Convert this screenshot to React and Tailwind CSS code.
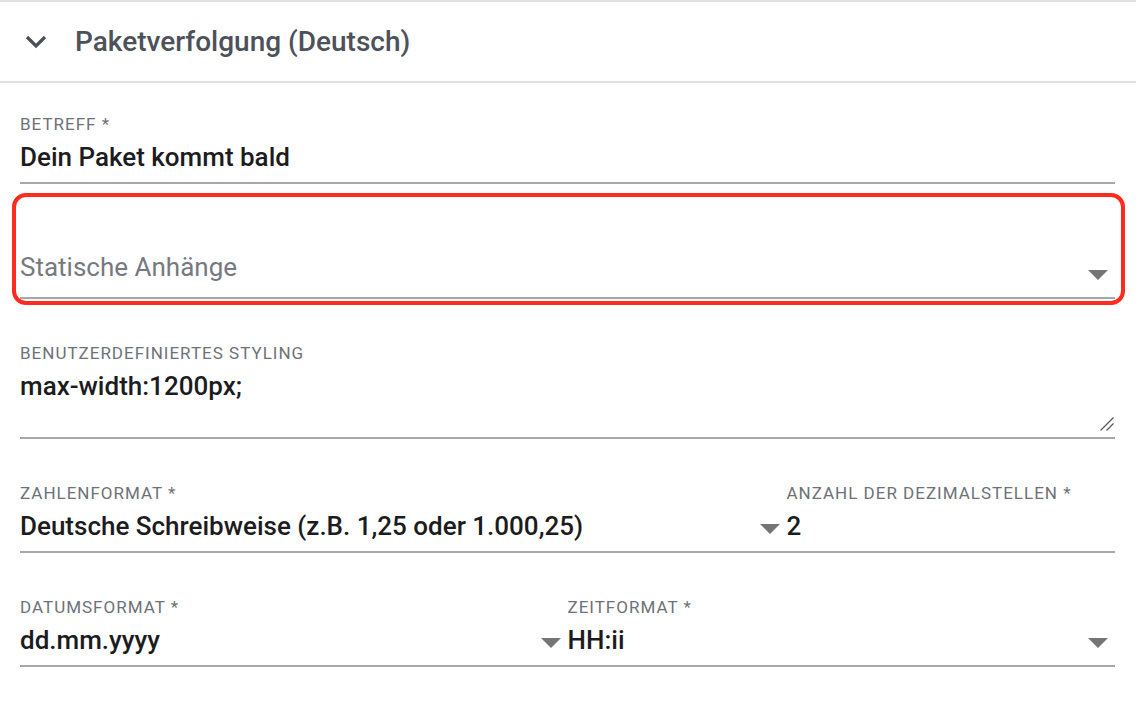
import React from "react";

function Triangle() {
  return (
    <svg
      className="absolute right-[7px] top-[41px]"
      width="20"
      height="10"
      viewBox="0 0 20 10"
    >
      <path d="M0 0 L20 0 L10 10 Z" fill="#757575" />
    </svg>
  );
}

function Field({ label, value, select, textarea, className = "" }) {
  return (
    <div className={`relative border-b-2 border-[#a6a8ac] pb-[9px] ${className}`}>
      <div className="h-5 text-[17px] leading-5 tracking-[1px] text-[#6d7178] uppercase whitespace-nowrap">
        {label}
      </div>
      <div
        className={`mt-[7px] ${textarea ? "h-[58px]" : "h-8"} text-[26px] leading-8 font-medium text-[#1c1c1e] whitespace-nowrap`}
      >
        {value}
      </div>
      {select && <Triangle />}
      {textarea && (
        <svg
          className="absolute right-[1px] bottom-[6px]"
          width="14"
          height="14"
          viewBox="0 0 14 14"
        >
          <path d="M13.5 0.5 L0.5 13.5 M13.5 6.5 L6.5 13.5" stroke="#5a5a5a" strokeWidth="1.3" />
        </svg>
      )}
    </div>
  );
}

export default function App() {
  return (
    <div
      className="w-[1136px] h-[722px] bg-white overflow-hidden"
      style={{ fontFamily: "Roboto, 'Noto Sans', Arial, sans-serif" }}
    >
      <div className="h-[83px] border-t-2 border-b-2 border-[#dde1e5] flex items-center pl-6">
        <svg width="24" height="16" viewBox="0 0 24 16">
          <path
            d="M3 3 L12 12 L21 3"
            fill="none"
            stroke="#4b4f58"
            strokeWidth="3.2"
          />
        </svg>
        <div className="ml-[27px] text-[28px] font-medium text-[#4d5159] leading-8 whitespace-nowrap">
          Paketverfolgung (Deutsch)
        </div>
      </div>

      <div className="pl-5 pr-[21px]">
        <Field className="mt-[31px]" label="Betreff *" value="Dein Paket kommt bald" />

        <div className="relative mt-[45px]">
          <div className="relative h-[70px] border-b-2 border-[#a6a8ac]">
            <div className="pt-[22px] h-8 text-[26px] leading-8 text-[#76797f] whitespace-nowrap">
              Statische Anhänge
            </div>
            <Triangle />
          </div>
          <div className="pointer-events-none absolute -left-[8px] -right-[10px] -top-[36px] -bottom-[6px] rounded-[14px] border-[4px] border-[#ff2b1f]" />
        </div>

        <Field
          className="mt-[44px]"
          label="Benutzerdefiniertes Styling"
          value="max-width:1200px;"
          textarea
        />

        <div className="mt-[44px] flex">
          <Field
            className="w-[70%]"
            label="Zahlenformat *"
            value="Deutsche Schreibweise (z.B. 1,25 oder 1.000,25)"
            select
          />
          <Field className="flex-1" label="Anzahl der Dezimalstellen *" value="2" />
        </div>

        <div className="mt-[44px] flex">
          <Field className="w-1/2" label="Datumsformat *" value="dd.mm.yyyy" select />
          <Field className="flex-1" label="Zeitformat *" value="HH:ii" select />
        </div>
      </div>
    </div>
  );
}
